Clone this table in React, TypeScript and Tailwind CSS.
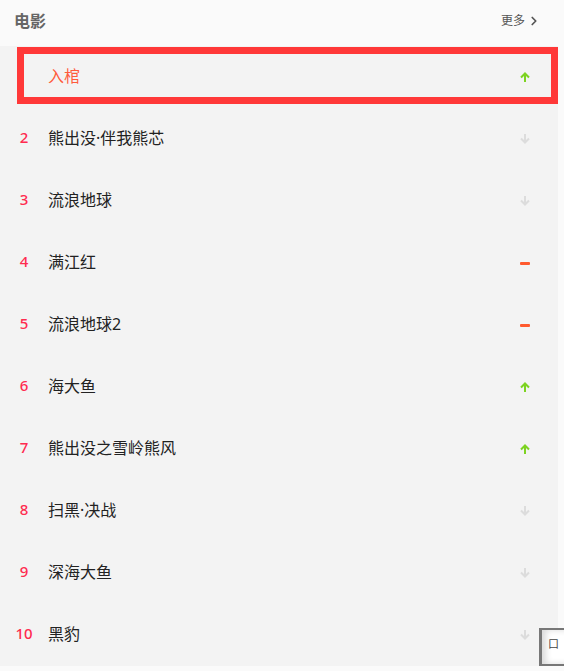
import { ChevronRight } from 'lucide-react';

type Trend = 'up' | 'down' | 'same';

const MOVIES: { title: string; trend: Trend }[] = [
  { title: '入棺', trend: 'up' },
  { title: '熊出没·伴我熊芯', trend: 'down' },
  { title: '流浪地球', trend: 'down' },
  { title: '满江红', trend: 'same' },
  { title: '流浪地球2', trend: 'same' },
  { title: '海大鱼', trend: 'up' },
  { title: '熊出没之雪岭熊风', trend: 'up' },
  { title: '扫黑·决战', trend: 'down' },
  { title: '深海大鱼', trend: 'down' },
  { title: '黑豹', trend: 'down' },
];

function TrendIcon({ trend }: { trend: Trend }) {
  if (trend === 'same') {
    return <div className="h-[3px] w-[10px] rounded-[1px] bg-[#ff5a2e]" />;
  }
  const color = trend === 'up' ? '#7dd321' : '#dcdcdc';
  return (
    <svg width="10" height="10" viewBox="0 0 10 10" fill="none" className={trend === 'down' ? 'rotate-180' : ''}>
      <path d="M5 10V1.5M1 5.5L5 1.5L9 5.5" stroke={color} strokeWidth="2" />
    </svg>
  );
}

export default function App() {
  return (
    <div className="relative h-[671px] w-[564px] overflow-hidden bg-[#fafafa] font-['Noto_Sans','Noto_Sans_CJK_SC',sans-serif]">
      <div className="flex h-[46px] items-center justify-between pb-[4px] pl-[14px] pr-[23px]">
        <span className="text-[16px] font-bold text-[#666]">电影</span>
        <span className="flex items-center text-[12px] text-[#555]">
          更多
          <ChevronRight className="ml-[2px] h-[14px] w-[14px]" strokeWidth={3} />
        </span>
      </div>

      <ul className="w-[558px] bg-[#f3f3f3]">
        {MOVIES.map((m, i) => (
          <li key={m.title} className="relative flex h-[62px] items-center">
            <span className="w-[48px] pb-[3px] text-center text-[15px] font-medium text-[#ff2b4f]">
              {i === 0 ? '' : i + 1}
            </span>
            <span className={`flex-1 pb-[3px] text-[16px] ${i === 0 ? 'text-[#ff5b3b]' : 'text-[#222]'}`}>{m.title}</span>
            <div className="mr-[28px] flex w-[10px] justify-center">
              <TrendIcon trend={m.trend} />
            </div>
            {i === 0 && (
              <div className="absolute left-[17px] right-0 top-[1px] h-[57px] border-[7px] border-[#ff3838]" />
            )}
          </li>
        ))}
      </ul>

      <div className="absolute left-[539px] top-[628px] h-[38px] w-[30px] border-y-[2px] border-l-[3px] border-[#777] bg-white shadow-[inset_4px_0_6px_rgba(0,0,0,0.15)]">
        <span className="absolute left-[6px] top-[8px] text-[11px] leading-none text-[#444]">口</span>
      </div>
    </div>
  );
}
